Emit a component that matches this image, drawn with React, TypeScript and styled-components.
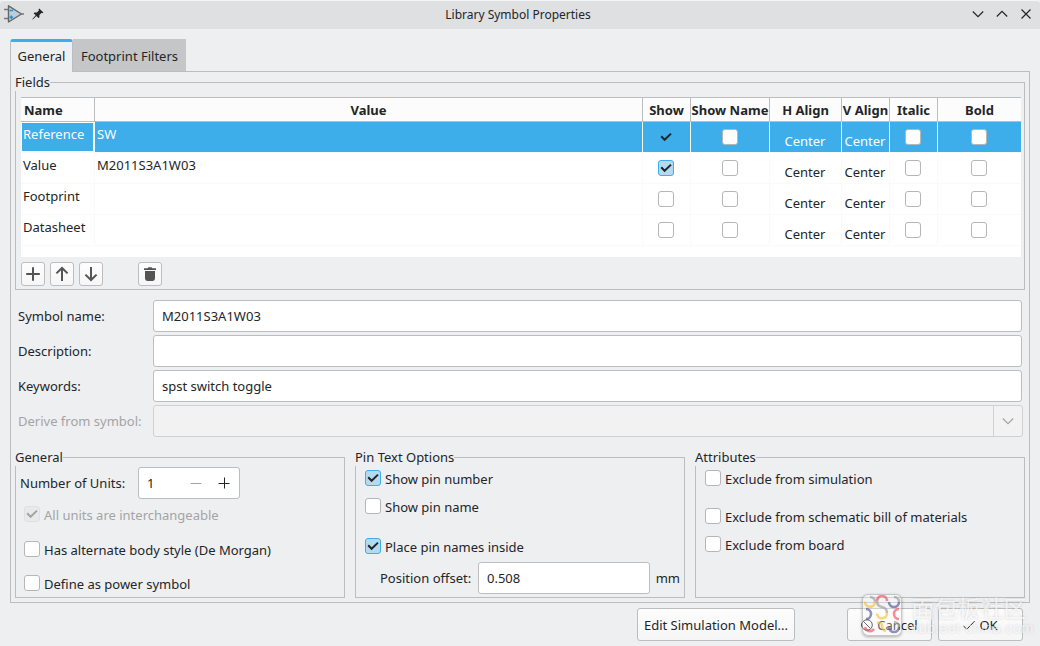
import React, { useState } from "react";
import styled, { createGlobalStyle, css } from "styled-components";

const c = {
  window: "#eeeff1",
  title: "#dee0e2",
  line: "#bbbdbf",
  text: "#232629",
  muted: "#a3a4a6",
  accent: "#3daee9",
  tick: "#b4daef",
};

const GlobalStyle = createGlobalStyle`
  *, *::before, *::after { box-sizing: border-box; }
  body {
    margin: 0;
    background: ${c.window};
    color: ${c.text};
    font: 13px/18px "Noto Sans", sans-serif;
  }
  button, input, select { font: inherit; color: inherit; margin: 0; }
`;

const Dialog = styled.main`
  display: flex;
  flex-direction: column;
  min-height: 100vh;
  background: ${c.window};
`;

const TitleBar = styled.header`
  display: grid;
  grid-template-columns: 1fr auto 1fr;
  align-items: center;
  height: 29px;
  padding: 0 8px 2px 4px;
  border-top: 1px solid #f4f5f5;
  border-radius: 4px 4px 0 0;
  background: ${c.title};
`;

const Title = styled.h1`
  margin: 0;
  padding-top: 2px;
  font: inherit;
  font-size: 12px;
`;

const TitleIcons = styled.div`
  display: flex;
  align-items: center;
  gap: 8px;
`;

const WindowControls = styled.div`
  display: flex;
  justify-content: flex-end;
  gap: 12px;
`;

const PlainButton = styled.button`
  display: flex;
  padding: 0;
  border: 0;
  background: none;
`;

const Tabs = styled.div`
  display: flex;
  margin: 10px 10px 0;
`;

const Tab = styled.button<{ $active?: boolean }>`
  width: 113px;
  height: 33px;
  margin-bottom: -1px;
  padding: 2px 0 0;
  border: 0;
  white-space: nowrap;
  ${(p) =>
    p.$active
      ? css`
          position: relative;
          width: 63px;
          padding: 0 0 2px;
          border: 1px solid ${c.line};
          border-top: 3px solid ${c.accent};
          border-bottom: 0;
          border-radius: 3px 3px 0 0;
          background: ${c.window};
        `
      : css`
          border-bottom: 1px solid #a9abad;
          background: #c5c6c8;
        `}
`;

const Panel = styled.section`
  margin: 0 10px;
  padding: 1px 4px 4px;
  border: 1px solid ${c.line};
`;

const Group = styled.fieldset`
  flex: 1;
  min-width: 0;
  margin: 0;
  padding: 0;
  border: 1px solid ${c.line};
`;

const Legend = styled.legend`
  margin-left: -1px;
  padding: 0;
  background: ${c.window};
`;

const GridArea = styled.div`
  margin: 6px 3px 0 5px;
  padding-bottom: 11px;
  border-top: 1px solid ${c.line};
  background: #fff;
`;

const FieldTable = styled.table`
  width: 100%;
  table-layout: fixed;
  border-collapse: separate;
  border-spacing: 0;
`;

const Col = styled.col<{ $w?: number }>`
  width: ${(p) => (p.$w ? `${p.$w}px` : "auto")};
`;

const HeadCell = styled.th<{ $left?: boolean }>`
  height: 24px;
  padding: ${(p) => (p.$left ? "0 0 0 3px" : "0")};
  border-right: 1px solid ${c.line};
  border-bottom: 1px solid ${c.line};
  background: #fcfcfc;
  text-align: ${(p) => (p.$left ? "left" : "center")};
  white-space: nowrap;
  overflow: hidden;
  &:last-child { border-right: 0; }
`;

const Row = styled.tr<{ $selected?: boolean }>`
  color: ${(p) => (p.$selected ? "#fcfcfc" : "inherit")};
  background: ${(p) => (p.$selected ? c.accent : "#fff")};
`;

const Cell = styled.td<{ $kind?: "text" | "align" | "check"; $focus?: boolean }>`
  height: 31px;
  border-right: 1px solid #fafafa;
  border-bottom: 1px solid #fafafa;
  vertical-align: top;
  white-space: nowrap;
  overflow: hidden;
  text-align: ${(p) => (p.$kind === "text" ? "left" : "center")};
  padding: ${(p) => (p.$kind === "text" ? "3px 2px 0" : p.$kind === "align" ? "10px 1px 0 0" : "7px 1px 0 0")};
  &:last-child { border-right: 0; }
  ${(p) => p.$focus && css`box-shadow: inset 0 0 0 1px #fff;`}
`;

const Tools = styled.div`
  display: flex;
  gap: 5px;
  padding: 5px 5px 3px;
`;

const ToolButton = styled.button<{ $apart?: boolean }>`
  display: grid;
  place-items: center;
  width: 24px;
  height: 24px;
  margin-left: ${(p) => (p.$apart ? "30px" : "0")};
  padding: 0;
  border: 1px solid ${c.line};
  border-radius: 3px;
  background: linear-gradient(#fdfdfd, #f6f6f7);
`;

const Form = styled.div`
  display: grid;
  grid-template-columns: 135px 1fr;
  gap: 3px 0;
  align-items: center;
  margin: 10px 3px 11px 3px;
`;

const Label = styled.label<{ $muted?: boolean; $width?: number }>`
  flex: none;
  width: ${(p) => (p.$width ? `${p.$width}px` : "auto")};
  color: ${(p) => (p.$muted ? c.muted : "inherit")};
  white-space: nowrap;
`;

const TextBox = styled.input`
  width: 100%;
  min-width: 0;
  height: 32px;
  padding: 0 8px;
  border: 1px solid ${c.line};
  border-radius: 3px;
  background: #fff;
  outline: 0;
`;

const Combo = styled.div`
  display: grid;
  grid-template-columns: 1fr 29px;
  height: 32px;
  margin-right: -1px;
  border: 1px solid #d0d1d3;
  border-radius: 3px;
  background: #f2f2f2;
`;

const ComboSelect = styled.select`
  grid-area: 1 / 1 / 2 / 3;
  appearance: none;
  padding: 0 8px;
  border: 0;
  background: none;
`;

const ComboArrow = styled.span`
  grid-area: 1 / 2;
  display: grid;
  place-items: center;
  border-left: 1px solid #d0d1d3;
  color: ${c.muted};
  pointer-events: none;
`;

const Groups = styled.div`
  display: flex;
  gap: 10px;
`;

const Stack = styled.div<{ $pad: string }>`
  display: flex;
  flex-direction: column;
  align-items: flex-start;
  padding: ${(p) => p.$pad};
`;

const Line = styled.div<{ $indent?: number; $top?: number; $gap: number }>`
  display: flex;
  align-items: center;
  align-self: stretch;
  gap: ${(p) => p.$gap}px;
  margin-top: ${(p) => p.$top ?? 0}px;
  padding-left: ${(p) => p.$indent ?? 0}px;
`;

const Spin = styled.div`
  display: flex;
  align-items: center;
  width: 102px;
  height: 32px;
  padding-right: 8px;
  border: 1px solid ${c.line};
  border-radius: 3px;
  background: #fff;
`;

const SpinInput = styled.input`
  width: 51px;
  padding: 0 0 0 8px;
  border: 0;
  background: none;
  outline: 0;
`;

const SpinButton = styled(PlainButton)`
  width: 28px;
  justify-content: flex-start;
  &:last-child { width: 12px; }
`;

const CheckLabel = styled.label<{ $top?: number; $indent?: number; $muted?: boolean }>`
  display: flex;
  align-items: flex-start;
  gap: 4px;
  height: 18px;
  margin-top: ${(p) => p.$top ?? 0}px;
  margin-left: ${(p) => p.$indent ?? 0}px;
  color: ${(p) => (p.$muted ? c.muted : "inherit")};
  white-space: nowrap;
`;

const CheckFrame = styled.span<{ $muted?: boolean }>`
  display: inline-grid;
  width: 16px;
  height: 16px;
  vertical-align: top;
  color: ${(p) => (p.$muted ? c.muted : c.text)};
  & > * { grid-area: 1 / 1; }
  svg { pointer-events: none; }
`;

const CheckInput = styled.input<{ $blend?: boolean }>`
  appearance: none;
  width: 16px;
  height: 16px;
  border: 1px solid #b5b6b8;
  border-radius: 3px;
  background: #fff;
  &:checked {
    border-color: ${c.accent};
    background: ${(p) => (p.$blend ? c.accent : c.tick)};
  }
  &:disabled {
    border-color: #e0e1e3;
    background: #e8e9eb;
  }
`;

const Footer = styled.footer`
  position: relative;
  display: flex;
  justify-content: flex-end;
  gap: 6px;
  padding: 5px 17px 5px 10px;
`;

const DialogButton = styled.button<{ $wide?: boolean }>`
  display: flex;
  align-items: center;
  justify-content: center;
  gap: 4px;
  width: ${(p) => (p.$wide ? "158px" : "85px")};
  height: 33px;
  margin-right: ${(p) => (p.$wide ? "46px" : "0")};
  padding: 0;
  border: 1px solid ${c.line};
  border-radius: 3px;
  background: linear-gradient(#fdfdfd, #f6f6f7);
  white-space: nowrap;
`;

const Watermark = styled.div`
  position: absolute;
  right: 8px;
  bottom: 10px;
  display: flex;
  gap: 4px;
  pointer-events: none;
`;

const MarkBadge = styled.div`
  width: 40px;
  height: 42px;
  border: 1px solid rgba(150, 150, 150, 0.5);
  border-radius: 6px;
  background: rgba(255, 255, 255, 0.3);
  box-shadow: 0 1px 3px rgba(0, 0, 0, 0.3);
`;

const MarkText = styled.div`
  width: 126px;
  color: rgba(255, 255, 255, 0.7);
  text-shadow: 0 0 3px rgba(0, 0, 0, 0.16);
  text-align: center;
  white-space: nowrap;
`;

const MarkName = styled.div`
  font: 23px/26px "Noto Sans CJK SC", sans-serif;
`;

const MarkSite = styled.div`
  color: rgba(255, 255, 255, 0.6);
  font: 15px/16px "Liberation Sans", sans-serif;
`;

const stroke = { fill: "none", stroke: "currentColor" } as const;

const Tick = () => (
  <svg width="16" height="16" viewBox="0 0 16 16" {...stroke} strokeWidth="2">
    <path d="M3.2 7.2 6.6 10.8 13 4.6" />
  </svg>
);

const OpAmpIcon = () => (
  <svg width="20" height="20" viewBox="0 0 20 20" fill="none">
    <path d="M0 5.5h4.5M0 14.5h4.5M17.5 10H20" stroke="#777" strokeWidth="1.6" />
    <path d="M4.5 1.8 17.5 10 4.5 18z" fill="#b9cfe0" stroke="#666" strokeWidth="1.4" strokeLinejoin="round" />
    <path d="M5.5 6.4h3.6M5.5 13.2h3.6M7.3 11.4V15" stroke="#2b8fd0" strokeWidth="1.5" />
  </svg>
);

const PinIcon = () => (
  <svg width="12" height="12" viewBox="0 0 12 12" fill={c.text}>
    <path d="M7.2.4 11.4 4.4 10.4 5.2 9.6 4.8 7.4 7.1 7.4 9.4 6.5 10.1 4.4 8 .8 11.4.4 11 3.7 7.3 1.6 5.3 2.4 4.4 4.9 4.4 7 2.2 6.5 1.3z" />
  </svg>
);

const ChevronIcon = ({ up }: { up?: boolean }) => (
  <svg width="12" height="12" viewBox="0 0 12 12" {...stroke} strokeWidth="1.2">
    <path d={up ? "M.8 8.5 6 3.3 11.2 8.5" : "M.8 3.5 6 8.7 11.2 3.5"} />
  </svg>
);

const CloseIcon = () => (
  <svg width="12" height="12" viewBox="0 0 12 12" {...stroke} strokeWidth="1.2">
    <path d="M1.5 1.5 10.5 10.5M10.5 1.5 1.5 10.5" />
  </svg>
);

const toolPaths = {
  add: "M8 1.2V14.8M1.2 8H14.8",
  up: "M8 15V2.2M2.4 7.4 8 2 13.6 7.4",
  down: "M8 1V13.8M2.4 8.6 8 14 13.6 8.6",
};

const ToolIcon = ({ kind }: { kind: keyof typeof toolPaths }) => (
  <svg width="16" height="16" viewBox="0 0 16 16" fill="none" stroke="#545454" strokeWidth="2">
    <path d={toolPaths[kind]} />
  </svg>
);

const TrashIcon = () => (
  <svg width="16" height="16" viewBox="0 0 16 16" fill="#545454">
    <path d="M2 2.2H5.6L6.4 1.2H9.6L10.4 2.2H14V4H2zM3 5H13V12.6Q13 15 10.8 15H5.2Q3 15 3 12.6z" />
  </svg>
);

const MarkLogo = () => (
  <svg width="38" height="40" viewBox="0 0 38 40" fill="none" strokeWidth="2.6" opacity="0.62">
    <path d="M2 6.5A5 5 0 0 0 12 7M14 18.5A5 5 0 0 0 24 18M14 28Q19 27 19 31T23 36" stroke="#f2c12e" />
    <path d="M14 6A5 5 0 0 1 24 6M36 14A5 5 0 0 0 36 24M2 32A5 5 0 0 0 11 34" stroke="#ee4a5a" />
    <path d="M26 7A5 5 0 0 0 36 7M3 14A5 5 0 0 1 3 24M26 32A5 5 0 0 0 36 32" stroke="#4d4f94" />
    <path d="M7 2A5 5 0 0 1 12 7M14 6Q14 11 19 12T24 18M31 2A5 5 0 0 1 36 7M31 27A5 5 0 0 1 36 32" stroke="#999" />
  </svg>
);

type CheckProps = { name: string; on?: boolean; blend?: boolean; disabled?: boolean; labelled?: boolean };

function Check({ name, on = false, blend, disabled, labelled }: CheckProps) {
  const [checked, setChecked] = useState(on);
  return (
    <CheckFrame $muted={disabled}>
      <CheckInput
        type="checkbox"
        aria-label={labelled ? undefined : name}
        checked={checked}
        disabled={disabled}
        $blend={blend}
        onChange={(e) => setChecked(e.target.checked)}
      />
      {checked && <Tick />}
    </CheckFrame>
  );
}

type OptionProps = { text: string; on?: boolean; disabled?: boolean; top?: number; indent?: number };

const Option = ({ text, on, disabled, top, indent }: OptionProps) => (
  <CheckLabel $top={top} $indent={indent} $muted={disabled}>
    <Check name={text} on={on} disabled={disabled} labelled />
    {text}
  </CheckLabel>
);

const columns = [
  { title: "Name", width: 74 },
  { title: "Value" },
  { title: "Show", width: 48 },
  { title: "Show Name", width: 79 },
  { title: "H Align", width: 72 },
  { title: "V Align", width: 48 },
  { title: "Italic", width: 48 },
  { title: "Bold", width: 83 },
];

const fields = [
  { name: "Reference", value: "SW", show: true },
  { name: "Value", value: "M2011S3A1W03", show: true },
  { name: "Footprint", value: "", show: false },
  { name: "Datasheet", value: "", show: false },
];

export default function App() {
  return (
    <>
      <GlobalStyle />
      <Dialog>
        <TitleBar>
          <TitleIcons>
            <OpAmpIcon />
            <PlainButton aria-label="Keep above"><PinIcon /></PlainButton>
          </TitleIcons>
          <Title>Library Symbol Properties</Title>
          <WindowControls>
            <PlainButton aria-label="Minimize"><ChevronIcon /></PlainButton>
            <PlainButton aria-label="Maximize"><ChevronIcon up /></PlainButton>
            <PlainButton aria-label="Close"><CloseIcon /></PlainButton>
          </WindowControls>
        </TitleBar>

        <Tabs role="tablist">
          <Tab role="tab" aria-selected $active>General</Tab>
          <Tab role="tab" aria-selected={false}>Footprint Filters</Tab>
        </Tabs>

        <Panel>
          <Group>
            <Legend>Fields</Legend>
            <GridArea>
              <FieldTable>
                <colgroup>
                  {columns.map((col) => <Col key={col.title} $w={col.width} />)}
                </colgroup>
                <thead>
                  <tr>
                    {columns.map((col, i) => (
                      <HeadCell key={col.title} $left={i === 0}>{col.title}</HeadCell>
                    ))}
                  </tr>
                </thead>
                <tbody>
                  {fields.map((f, i) => (
                    <Row key={f.name} $selected={i === 0}>
                      <Cell $kind="text" $focus={i === 0}>{f.name}</Cell>
                      <Cell $kind="text">{f.value}</Cell>
                      <Cell><Check name={`Show ${f.name}`} on={f.show} blend={i === 0} /></Cell>
                      <Cell><Check name={`Show name of ${f.name}`} /></Cell>
                      <Cell $kind="align">Center</Cell>
                      <Cell $kind="align">Center</Cell>
                      <Cell><Check name={`Italic ${f.name}`} /></Cell>
                      <Cell><Check name={`Bold ${f.name}`} /></Cell>
                    </Row>
                  ))}
                </tbody>
              </FieldTable>
            </GridArea>
            <Tools>
              <ToolButton aria-label="Add field"><ToolIcon kind="add" /></ToolButton>
              <ToolButton aria-label="Move up"><ToolIcon kind="up" /></ToolButton>
              <ToolButton aria-label="Move down"><ToolIcon kind="down" /></ToolButton>
              <ToolButton aria-label="Delete field" $apart><TrashIcon /></ToolButton>
            </Tools>
          </Group>

          <Form>
            <Label htmlFor="symbol">Symbol name:</Label>
            <TextBox id="symbol" defaultValue="M2011S3A1W03" />
            <Label htmlFor="description">Description:</Label>
            <TextBox id="description" />
            <Label htmlFor="keywords">Keywords:</Label>
            <TextBox id="keywords" defaultValue="spst switch toggle" />
            <Label htmlFor="derive" $muted>Derive from symbol:</Label>
            <Combo>
              <ComboSelect id="derive" disabled />
              <ComboArrow><ChevronIcon /></ComboArrow>
            </Combo>
          </Form>

          <Groups>
            <Group>
              <Legend>General</Legend>
              <Stack $pad="1px 4px 4px 4px">
                <Line $gap={11}>
                  <Label htmlFor="units" $width={107}>Number of Units:</Label>
                  <Spin>
                    <SpinInput id="units" defaultValue="1" />
                    <SpinButton aria-label="Decrease" disabled>
                      <svg width="12" height="12" viewBox="0 0 12 12" stroke={c.muted}><path d="M.5 6.5H11.5" /></svg>
                    </SpinButton>
                    <SpinButton aria-label="Increase">
                      <svg width="12" height="12" viewBox="0 0 12 12" stroke={c.text}><path d="M.5 6.5H11.5M6.5 .5V11.5" /></svg>
                    </SpinButton>
                  </Spin>
                </Line>
                <Option text="All units are interchangeable" on disabled top={7} indent={4} />
                <Option text="Has alternate body style (De Morgan)" top={17} indent={4} />
                <Option text="Define as power symbol" top={16} indent={4} />
              </Stack>
            </Group>

            <Group>
              <Legend>Pin Text Options</Legend>
              <Stack $pad="4px 4px 3px 9px">
                <Option text="Show pin number" on />
                <Option text="Show pin name" top={10} />
                <Option text="Place pin names inside" on top={22} />
                <Line $gap={6} $top={6} $indent={15}>
                  <Label htmlFor="offset" $width={92}>Position offset:</Label>
                  <TextBox id="offset" defaultValue="0.508" />
                  <span>mm</span>
                </Line>
              </Stack>
            </Group>

            <Group>
              <Legend>Attributes</Legend>
              <Stack $pad="4px 4px 3px 9px">
                <Option text="Exclude from simulation" />
                <Option text="Exclude from schematic bill of materials" top={20} />
                <Option text="Exclude from board" top={10} />
              </Stack>
            </Group>
          </Groups>
        </Panel>

        <Footer>
          <DialogButton $wide>Edit Simulation Model...</DialogButton>
          <DialogButton>
            <svg width="12" height="12" viewBox="0 0 12 12" {...stroke}>
              <circle cx="6" cy="6" r="5.3" />
              <path d="M2.4 2.4 9.6 9.6" />
            </svg>
            Cancel
          </DialogButton>
          <DialogButton>
            <svg width="12" height="12" viewBox="0 0 12 12" {...stroke}>
              <path d="M.5 7 3.8 10.2 11.6 2.2" />
            </svg>
            OK
          </DialogButton>
          <Watermark>
            <MarkBadge><MarkLogo /></MarkBadge>
            <MarkText>
              <MarkName>面包板社区</MarkName>
              <MarkSite>mbb.eet-china.com</MarkSite>
            </MarkText>
          </Watermark>
        </Footer>
      </Dialog>
    </>
  );
}
